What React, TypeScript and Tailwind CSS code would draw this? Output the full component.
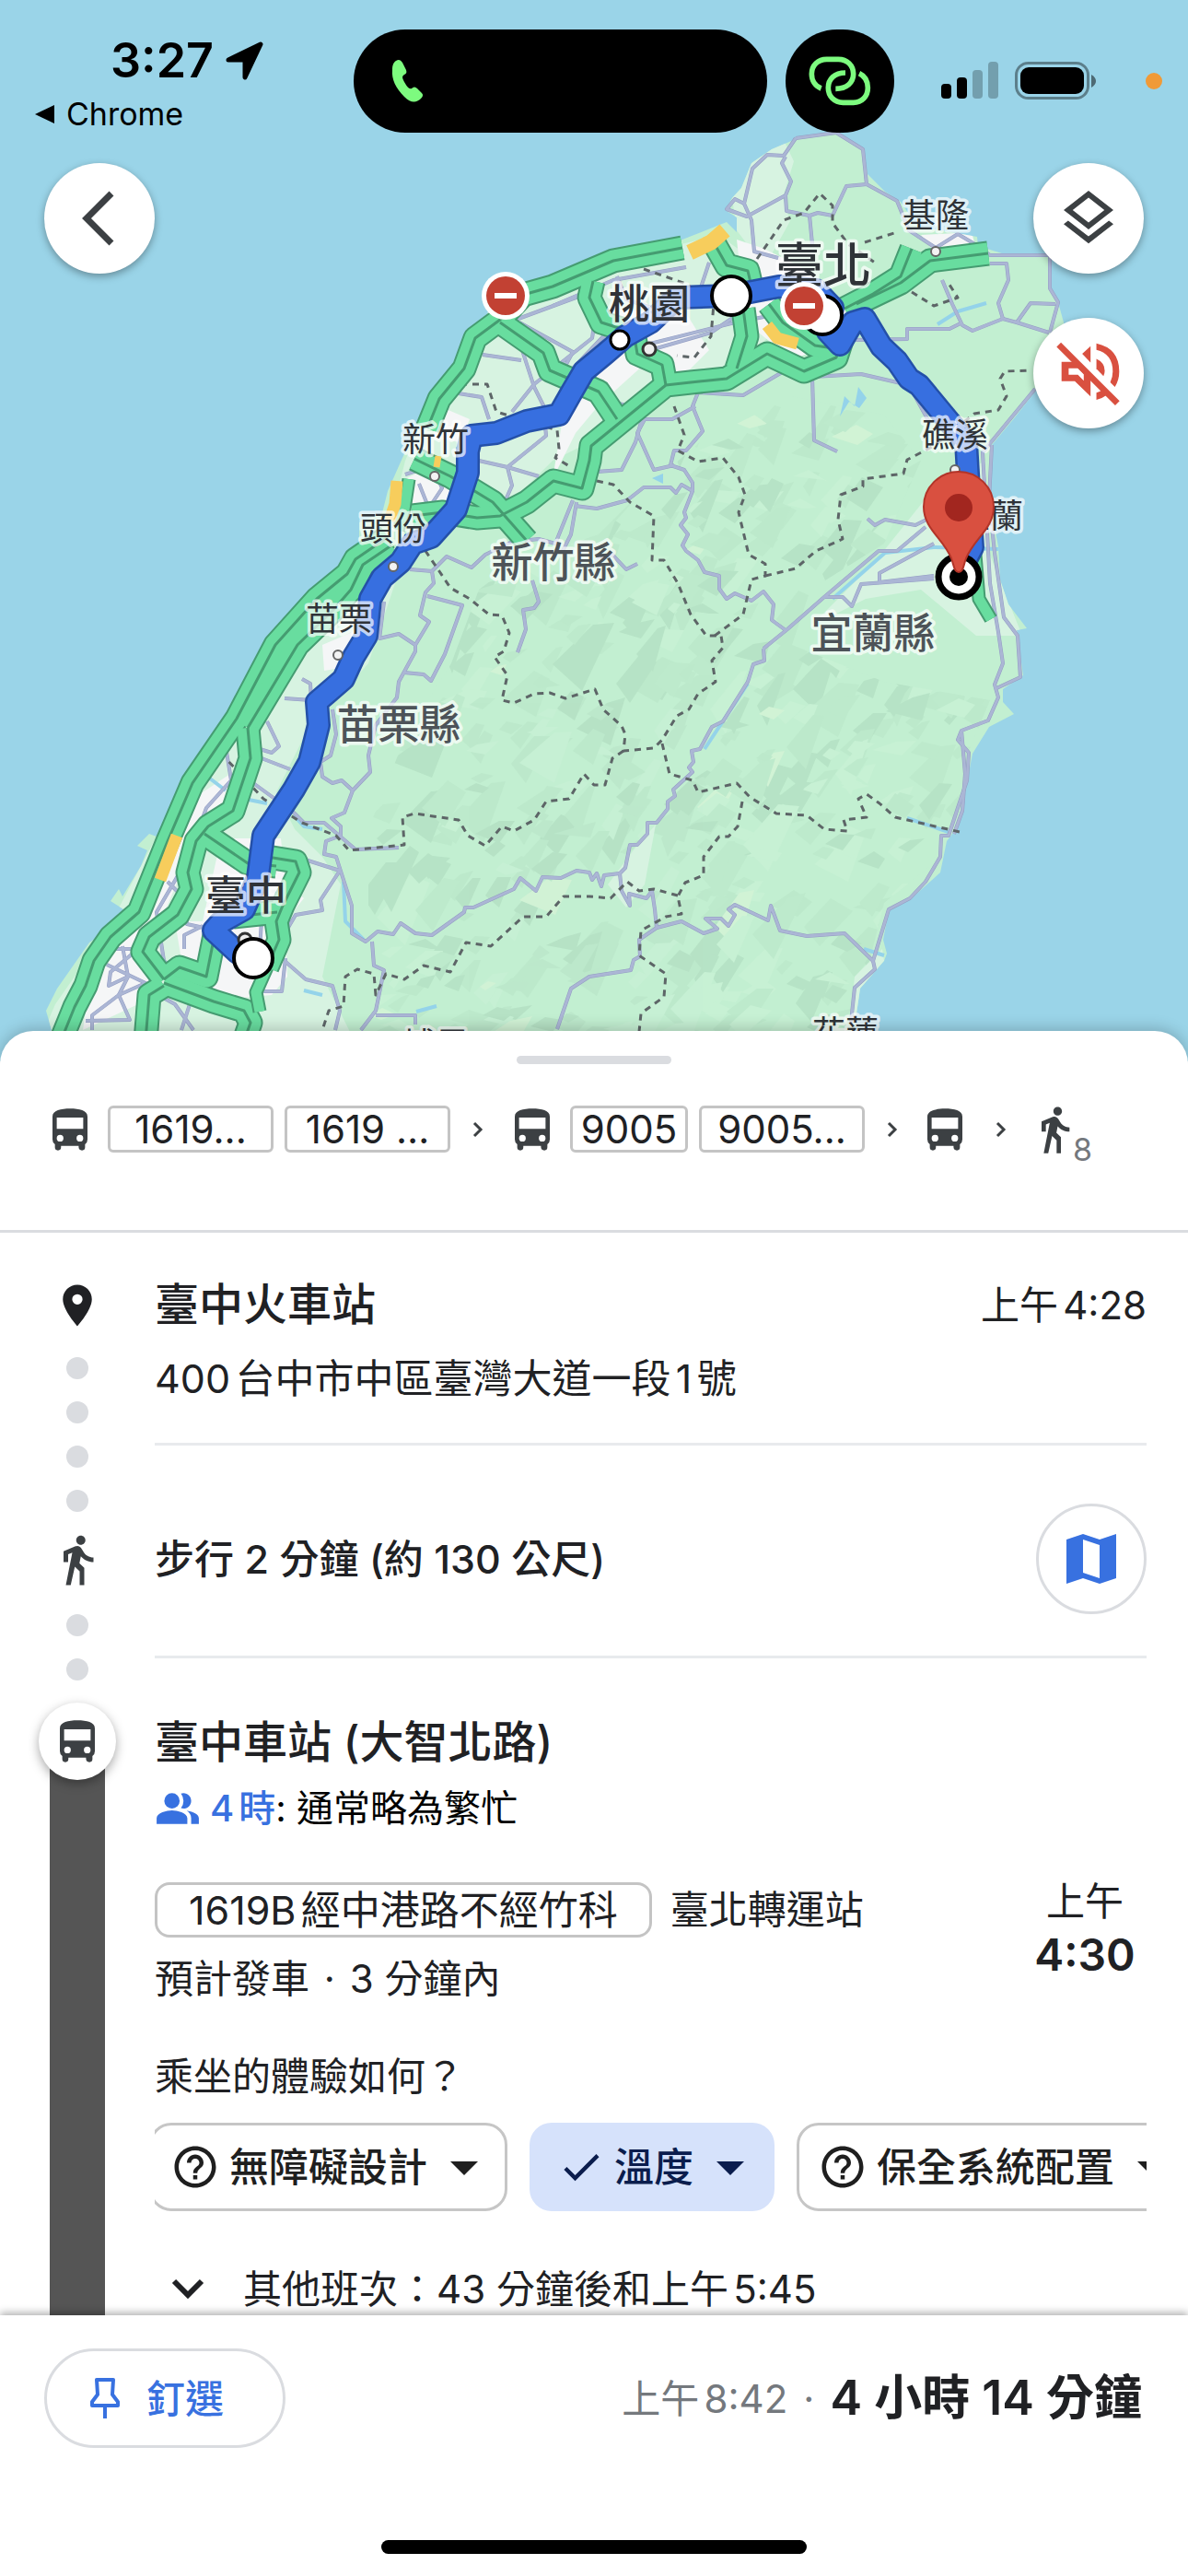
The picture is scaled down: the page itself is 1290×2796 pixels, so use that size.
import React, { useState } from "react";
import type { ReactNode } from "react";
import {
  MdArrowDropDown,
  MdCheck,
  MdDirectionsWalk,
  MdHelpOutline,
  MdOutlineLayers,
  MdPeopleAlt,
  MdPlace,
} from "react-icons/md";

// --- Map data ---

const LAND =
  "864,151 908,144 937,160 942,189 961,208 978,219 996,246 1033,252 1061,257 1062,267 1088,275 1139,277 1140,313 1149,328 1155,350 1152,390 1135,411 1102,453 1077,483 1074,541 1084,593 1086,629 1095,656 1115,682 1104,684 1111,733 1089,748 1089,762 1101,775 1074,789 1056,818 1048,860 1038,900 1028,913 1021,947 992,973 965,988 959,1020 963,1035 960,1043 934,1073 930,1100 924,1160 30,1160 56,1118 50,1097 62,1073 97,1023 116,1010 139,990 120,978 129,965 133,973 153,940 160,923 149,918 162,905 170,908 197,850 249,777 288,693 303,677 332,647 344,633 381,605 390,593 390,567 415,557 421,533 437,497 454,460 466,427 493,397 512,358 524,350 531,337 576,313 600,302 666,273 736,262 789,241 800,252 800,236 789,229 794,216 805,204 816,177 838,162";

const LOWLANDS = [
  "531,337 600,305 700,275 780,255 830,290 860,340 800,400 720,420 660,470 600,500 560,540 520,560 460,560 430,540 440,500 466,440 495,400",
  "345,640 400,610 440,600 400,720 330,800 300,860 320,900 350,930 370,960 350,1060 380,1120 30,1160 60,1090 116,1010 153,940 190,870 249,777",
  "1014,530 1070,500 1074,600 1110,690 1060,690 1000,640 940,650 880,680 950,610",
  "816,177 850,150 862,175 850,215 858,240 830,290 800,250 795,215",
  "660,960 690,920 712,895 700,960 680,985",
  "928,1060 958,1030 960,1043 934,1073 930,1160 918,1160",
];

const URBAN = [
  "655,335 745,340 770,380 740,410 700,395 650,440 625,470 600,520 615,430 650,400",
  "800,260 830,270 870,290 920,330 915,370 860,390 810,350",
  "440,520 480,500 500,530 490,560 450,555",
  "475,440 510,455 500,480 470,475",
  "205,870 250,840 245,880 215,900 200,940 170,1010 175,1060 150,1090 90,1118 100,1050 125,1020 160,985 180,950",
  "240,910 305,910 310,960 330,975 310,1000 312,1060 295,1080 240,1085 200,1060 190,1000 220,1000",
  "350,700 385,685 370,725 352,728",
  "1000,255 1055,252 1060,270 1020,280",
  "420,600 400,640 392,650 400,620",
];

const MOUNTAINS =
  "560,610 650,580 690,540 760,480 860,430 960,450 1000,500 960,590 880,640 860,700 960,740 1075,760 1050,820 1038,880 1010,940 960,980 940,1060 920,1160 390,1160 400,1050 400,900 440,800 490,720 520,640";

const SMALL_ROADS = [
  "864,150 851,169 833,168 817,183 808,221 816,239 819,273 845,280",
  "853,170 849,177 859,197 853,212 811,235 789,227 798,216 808,221",
  "853,212 854,229 879,234 882,265",
  "864,150 908,144 937,162 941,200 919,202 904,234 888,231 879,234",
  "941,200 974,218 987,250 1016,269 1040,254 1062,267 1075,277 1140,277 1140,313 1149,328 1140,361",
  "1023,304 1034,330 1045,353 1056,359 1089,346 1104,350 1139,361",
  "1104,350 1119,329 1146,330",
  "926,369 985,368 985,357 1031,357 1045,350",
  "1075,286 1093,286 1095,304 1084,329 1089,346",
  "882,409 884,478 909,490",
  "882,409 935,406 987,418 1010,460",
  "1124,422 1067,491 1075,633 1084,686 1089,720 1080,743 1084,757 1073,782 1044,793 1040,803 1052,817 1050,847 1038,883 1030,907 1022,907 1021,930 1005,957 988,975 965,987 948,1043 950,1052 928,1072 924,1110",
  "1044,793 1048,840 1045,880 1036,905",
  "1077,483 1074,541 1080,600 1090,670 1105,690 1108,735 1080,748",
  "1014,560 994,570 961,564 950,570 942,563",
  "1005,572 974,598 954,598 895,648 855,683 829,704",
  "1014,590 955,622 955,632 1014,625",
  "1014,628 935,634 925,658 915,648 895,648",
  "829,704 830,717 818,721 812,740 785,783 773,789 760,813 751,815 753,827 748,833 752,838 731,857 733,864 725,870 725,878 713,893 703,893 703,905 692,917 684,917 679,942 673,948 675,967 684,983 683,970 702,975 708,967 711,987 713,1007 694,1020 695,1038 688,1042 685,1053 640,1060 620,1073 605,1117",
  "713,1007 740,1000 764,1013 779,1008 766,997 783,997 791,1005 798,993 791,987 798,982 834,999 837,983 847,1010 876,1016 917,1013 948,1043",
  "673,948 656,950 653,962 648,948 643,955 640,947 626,945 609,953 589,952 582,967 565,953 558,965 514,985 505,985 504,990 469,1015 451,1013 435,1002 427,1014 410,1011 397,1022 382,1013 382,983 365,930 352,927 354,913 370,907 370,897 360,888 374,882 383,858 402,838 400,820 408,787 431,757 433,740 451,707 451,700 466,675 456,668 462,643 471,633 469,620 485,604 512,616 527,602 556,588 585,585 603,590 622,543",
  "624,549 648,552 681,543 699,529 728,529 734,535 740,526 752,533 743,556 745,562 739,570 747,580 741,592 745,598 758,608 765,621 781,625 781,639 789,650 798,644 816,652 829,642 840,656 838,673 853,684",
  "752,533 752,524 743,510 728,505 732,489 745,489 763,468 752,441 758,426 807,429 851,403 873,390",
  "732,505 710,510 692,470 700,455 730,455 755,441",
  "648,512 675,510 690,480 697,455",
  "600,332 666,304 745,290",
  "706,373 798,350 850,340",
  "706,380 772,361 800,342",
  "770,285 760,315 720,330",
  "670,300 680,325 740,345",
  "564,350 622,382 614,397",
  "560,347 647,315",
  "647,340 643,367 580,417 556,447",
  "566,377 580,420 590,440 593,473 551,507 556,527 548,545",
  "520,500 551,507 585,517",
  "524,385 566,391",
  "498,427 523,431 531,455",
  "600,400 640,430 700,445",
  "620,440 622,400 660,360",
  "440,515 470,505 480,530 460,560",
  "455,525 465,550 490,550",
  "464,647 502,657 483,710 468,739 460,732 439,730",
  "578,630 585,653 580,660 568,662 571,683 562,708",
  "417,653 412,693 433,688 451,700",
  "445,618 470,620",
  "328,737 337,742 338,760 309,758",
  "284,823 315,835",
  "290,783 303,810 295,817 282,813",
  "361,770 365,797 359,820 348,827 350,843 361,850 371,847 383,858",
  "275,850 319,882 330,893 352,893 386,922 433,920",
  "328,932 369,945 348,977 350,988 321,993 311,1010",
  "309,1043 332,1063 361,1070 369,1097 364,1118",
  "404,1022 406,1048 417,1053 408,1097 392,1118",
  "408,1102 451,1102 451,1112",
  "245,810 251,847 224,877 205,930 170,990 178,1043 200,1060",
  "116,1047 158,1067 129,1080 100,1102 100,1118",
  "133,1027 139,1060 129,1080 141,1107 93,1108",
  "118,1030 150,1030 120,1055 118,1070 139,1060",
  "207,1087 197,1118",
  "172,1080 190,1090 210,1118",
  "182,957 200,975 203,1003 235,1010",
  "310,1040 306,1076 280,1076",
  "220,1005 200,1015 200,1030",
  "284,1000 282,1030",
  "626,545 620,580 610,600",
  "648,605 665,602 680,618 692,612",
];

const GREEN_ROADS = [
  "66,1130 81,1093 93,1070 102,1043 120,1017 151,990 182,913 209,850 257,780 299,700 344,650 377,623 386,607 421,583",
  "269,790 323,700 361,663 381,640 394,613 425,592",
  "269,790 272,823 253,880 226,897 213,913 204,947 208,965 193,993 162,1017 155,1033 178,1063",
  "178,1063 195,1050 224,1060 234,1010",
  "222,905 269,937 300,940",
  "290,930 321,935 325,947 307,983 300,1000 303,1020 290,1050",
  "253,995 301,990",
  "178,1067 232,1087 265,1097 272,1110 265,1130",
  "178,1070 162,1080 158,1130",
  "464,465 477,433 504,400 516,367 543,347 568,320 600,311 666,283 741,269",
  "776,265 789,288 812,294 816,311",
  "543,350 590,383 597,402 650,425 670,455",
  "450,498 489,517 535,545 572,587",
  "448,560 481,556 518,562 543,560 572,545 601,522 632,530 640,500 642,484 723,418 750,415 789,411 833,384 873,403 908,388 917,360",
  "723,418 719,396 692,384 688,360",
  "644,305 640,323 653,350 675,357",
  "807,335 811,365 800,400",
  "917,335 948,319 978,300 990,270",
  "930,330 978,307 1010,283 1073,275",
  "835,330 850,350 885,375 905,378",
];

const BORDERS = [
  "500,417 529,417 539,447 593,463 605,467 607,487 603,497 620,507",
  "648,522 666,526 684,545 710,560 708,608 721,608 736,633 750,667 767,690 783,690 785,703 773,717 777,740 758,753 748,770 735,777 719,803 710,812 677,815 679,797 675,788 655,770 646,748 614,758 597,752 580,753 558,763 545,760 551,733 537,713 547,707 553,687 545,668 531,667 510,650 489,638 477,620 462,598",
  "677,815 665,823 657,852 645,852 634,840 618,867 593,870 580,890 558,902 545,897 527,918 508,907 498,890 450,883 437,887 439,917 379,923 365,907 328,893 286,867 245,823",
  "719,807 727,840 752,847 758,860 800,850 814,865 843,883 876,885 895,900 920,902 916,890 941,887 932,867 941,862 955,872 972,887 1042,903",
  "806,870 801,897 791,908 781,908 764,930 764,950 744,958 736,973 740,992 723,995 696,1010 694,1037 723,1057 721,1082 696,1100 694,1120",
  "736,972 710,965 694,967 681,957 663,975 640,973 612,973 593,995 568,995 533,1027 506,1023 489,1055 460,1048 439,1063 419,1057 408,1080 406,1057 388,1052 375,1060 373,1092 357,1097 350,1118",
  "732,441 743,472 736,489 758,501 785,497 802,518 809,537 802,556 813,602 831,612 831,625 816,629 807,667 776,690",
  "831,625 864,617 886,598 915,585 910,564 913,537 937,528 937,520 981,514 985,499 1014,484 1058,449 1084,445 1093,430 1086,411 1091,403 1119,402",
  "822,281 838,258 851,239 873,231 890,210 904,223 904,242 921,265 950,285",
  "939,263 974,252",
  "990,317 1014,332 1040,323 1029,306",
  "699,292 745,308 775,330 772,365 754,388 735,386",
];

const ROUTE =
  "258,1034 232,1010 240,1001 265,987 280,953 286,907 319,857 336,827 346,787 344,762 373,737 384,713 398,690 402,650 415,627 435,610 448,590 468,583 495,553 508,513 508,490 512,473 539,470 572,457 607,450 620,427 634,403 657,384 679,365 706,350 735,323 794,321 846,311 886,315 904,334 899,360 912,374 926,350 939,346 957,376 974,392 987,411 998,418 1036,464 1049,480 1051,514 1056,594 1044,617";

// x, y are the centre of the label
const LABELS = [
  { text: "基隆", x: 1016, y: 234, kind: "town" },
  { text: "新竹", x: 473, y: 477, kind: "town" },
  { text: "頭份", x: 427, y: 574, kind: "town" },
  { text: "苗栗", x: 368, y: 672, kind: "town" },
  { text: "礁溪", x: 1037, y: 472, kind: "town" },
  { text: "宜蘭", x: 1075, y: 560, kind: "town" },
  { text: "埔里", x: 473, y: 1134, kind: "town" },
  { text: "花蓮", x: 918, y: 1121, kind: "town" },
  { text: "桃園", x: 705, y: 330, kind: "city" },
  { text: "臺中", x: 267, y: 972, kind: "city" },
  { text: "臺北", x: 894, y: 288, kind: "capital" },
  { text: "新竹縣", x: 601, y: 610, kind: "county" },
  { text: "苗栗縣", x: 433, y: 786, kind: "county" },
  { text: "宜蘭縣", x: 948, y: 687, kind: "county" },
];

const LABEL_STYLE: Record<string, string> = {
  town: "text-[36px] fill-[#2f3338]",
  city: "text-[44px] font-medium fill-[#2f3338]",
  capital: "text-[52px] font-medium fill-[#2f3338]",
  county: "text-[45px] font-medium fill-[#4d5358]",
};

// Relief: slanted shards, same pattern on every render
const FACET_COLORS = ["#b0dcc0", "#bae6c9", "#c9f1d6", "#b9e5c8", "#d9f4d8"];

const buildFacets = () => {
  let seed = 11;
  const rand = () => {
    seed = (seed * 16807) % 2147483647;
    return seed / 2147483647;
  };
  return Array.from({ length: 620 }, () => {
    const x = 390 + rand() * 690;
    const y = 430 + rand() * 710;
    const len = 10 + rand() * rand() * 70;
    const w = 6 + rand() * 18;
    const pick = rand();
    const fill =
      pick > 0.97 ? FACET_COLORS[4] : FACET_COLORS[Math.floor(pick * 4)];
    const pts = [
      [x, y],
      [x + w, y + w * (rand() - 0.3)],
      [x + w * rand() - len * 0.3, y + len],
      [x - w * rand() - len * 0.4, y + len * 0.6],
    ];
    return { fill, points: pts.map((p) => p.map(Math.round).join(",")).join(" ") };
  });
};

const FACETS = buildFacets();

const TransitMap = () => (
  <svg
    viewBox="0 0 1290 1152"
    preserveAspectRatio="xMidYMin slice"
    className="absolute inset-0 w-full h-full"
    strokeLinejoin="round"
    fill="none"
    role="img"
    aria-label="路線地圖"
  >
    <clipPath id="mountains">
      <polygon points={MOUNTAINS} />
    </clipPath>
    <clipPath id="land">
      <polygon points={LAND} />
    </clipPath>
    <polygon points={LAND} fill="#c2efd1" />
    <g clipPath="url(#land)">
      <g clipPath="url(#mountains)" opacity="0.65">
        {FACETS.map((f, i) => (
          <polygon key={i} points={f.points} fill={f.fill} />
        ))}
      </g>
      {LOWLANDS.map((p) => (
        <polygon key={p} points={p} fill="#d7f3e1" />
      ))}
      {URBAN.map((p) => (
        <polygon key={p} points={p} fill="#f5f6f7" />
      ))}
    </g>
    <path
      d="M912 452 917 430 928 441 932 420 941 432 933 443 922 436Z M708 519 720 514 720 525Z"
      fill="#94d3ea"
    />
    <path
      d="M1084 596 L1014 594 961 600 904 650 M1071 329 1040 338 1018 352 M373 957 375 1000 395 1020 M319 885 330 897 350 900 M228 845 245 858 M270 868 290 872 M985 888 1030 903 M938 1030 960 1037 M330 1075 350 1080 M452 1098 474 1092 M812 742 765 813"
      stroke="#94d3ea"
      strokeWidth="4"
    />
    {SMALL_ROADS.map((p) => (
      <polyline key={p} points={p} stroke="#939cc2" strokeWidth="4" />
    ))}
    {SMALL_ROADS.map((p) => (
      <polyline key={p} points={p} stroke="#abb6d5" strokeWidth="3" />
    ))}
    {BORDERS.map((p) => (
      <polyline
        key={p}
        points={p}
        stroke="#5d6567"
        strokeWidth="3"
        strokeDasharray="7 6"
      />
    ))}
    {GREEN_ROADS.map((p) => (
      <polyline key={p} points={p} stroke="#459c71" strokeWidth="27" />
    ))}
    {GREEN_ROADS.map((p) => (
      <polyline key={p} points={p} stroke="#68dd9f" strokeWidth="23" />
    ))}
    {GREEN_ROADS.map((p) => (
      <polyline key={p} points={p} stroke="#459c71" strokeWidth="3" />
    ))}
    {/* Single carriageways */}
    <path
      d="M444 520 439 553 432 575 M282 1098 278 1077 290 1050 M1058 590 1063 650 1076 672"
      stroke="#459c71"
      strokeWidth="15"
    />
    <path
      d="M444 520 439 553 432 575 M282 1098 278 1077 290 1050 M1058 590 1063 650 1076 672"
      stroke="#68dd9f"
      strokeWidth="11"
    />
    {/* Slow traffic */}
    <path d="M749 274 772 263 787 250" stroke="#f7cd5c" strokeWidth="17" />
    <path
      d="M431 522 429 547 423 565 M192 907 174 955 M833 353 844 367 866 373"
      stroke="#f7cd5c"
      strokeWidth="13"
    />
    <path d="M476 495 474 507" stroke="#f7cd5c" strokeWidth="7" />

    <polyline
      points={ROUTE}
      stroke="#2450a8"
      strokeWidth="26"
      strokeLinecap="round"
    />
    <polyline
      points={ROUTE}
      stroke="#376fe0"
      strokeWidth="21"
      strokeLinecap="round"
    />

    {[
      [472, 517],
      [427, 615],
      [367, 711],
      [1016, 273],
      [1037, 510],
    ].map(([x, y]) => (
      <circle
        key={x}
        cx={x}
        cy={y}
        r="5"
        fill="#f3f3f3"
        stroke="#666"
        strokeWidth="2"
      />
    ))}
    <circle cx="705" cy="379" r="7" fill="#eee" stroke="#333" strokeWidth="3" />
    <circle cx="266" cy="1020" r="7" fill="#eee" stroke="#333" strokeWidth="3" />

    {LABELS.map(({ text, x, y, kind }) => (
      <text
        key={text}
        x={x}
        y={y}
        textAnchor="middle"
        dominantBaseline="central"
        stroke="#ffffff"
        strokeOpacity="0.7"
        strokeWidth="7"
        paintOrder="stroke"
        className={LABEL_STYLE[kind]}
      >
        {text}
      </text>
    ))}

    <g fill="#fff" stroke="#000">
      <circle cx="673" cy="369" r="10" strokeWidth="3" />
      <circle cx="794" cy="321" r="21" strokeWidth="4" />
      <circle cx="893" cy="342" r="21" strokeWidth="4" />
      <circle cx="275" cy="1040" r="21" strokeWidth="4" />
    </g>
    {[
      [549, 321],
      [873, 332],
    ].map(([x, y]) => (
      <g key={x}>
        <circle cx={x} cy={y} r="26" fill="#fff" />
        <circle cx={x} cy={y} r="21" fill="#c24133" />
        <rect x={x - 12} y={y - 3} width="24" height="6" fill="#fff" />
      </g>
    ))}

    {/* Destination */}
    <circle cx="1041" cy="626" r="22" fill="#fff" stroke="#000" strokeWidth="7" />
    <circle cx="1041" cy="626" r="10" fill="#000" />
    <path
      d="M1041 621 C1036 621 1036 614 1033 606 C1024 584 1003 574 1003 550 A38 38 0 0 1 1079 550 C1079 574 1058 584 1049 606 C1046 614 1046 621 1041 621Z"
      fill="#d95040"
      stroke="#b23428"
      strokeWidth="2"
    />
    <circle cx="1041" cy="551" r="15" fill="#a2261f" />
  </svg>
);

// --- Icons ---

const BusIcon = () => (
  <svg viewBox="52 64 115 137" className="w-[38px] h-[46px] shrink-0">
    <path
      fill="#3c4043"
      fillRule="evenodd"
      d="M52 90C52 70 80 64 110 64S167 70 167 90V165Q167 176 159 181V191Q159 201 149 201T138 191V186H80V191Q80 201 70 201T60 191V181Q52 176 52 165ZM66 93V130H153V93ZM66 161A11 11 0 1 0 88 161A11 11 0 1 0 66 161ZM131 161A11 11 0 1 0 153 161A11 11 0 1 0 131 161Z"
    />
  </svg>
);

const MapIcon = () => (
  <svg viewBox="0 0 54 54" className="w-[54px] h-[54px]">
    <path
      fill="#3871e0"
      fillRule="evenodd"
      d="M0 6L18 0L36 6L54 0V48L36 54L18 48L0 54ZM18 6V42L36 48V12Z"
    />
  </svg>
);

const MuteIcon = () => (
  <svg viewBox="110 595 215 215" className="w-[72px] h-[72px]" fill="#d95040">
    <path d="M121 610L311 800" stroke="#d95040" strokeWidth="20" />
    <path
      fillRule="evenodd"
      d="M130 666H176L224 714V778L173 729H130ZM153 687V708H183L202 727V706L183 687Z"
    />
    <path d="M197 640L224 615V668Z" />
    <path d="M243 656Q270 668 270 695Q270 704 266 712L243 688Z" />
    <path d="M243 606Q317 622 317 697Q317 724 303 747L288 732Q296 716 296 697Q296 640 243 627Z" />
    <path d="M243 766Q254 763 262 757L278 773Q262 785 243 789Z" />
  </svg>
);

const LinkIcon = () => (
  <svg
    viewBox="116 122 204 162"
    className="w-[68px] h-[54px]"
    fill="none"
    stroke="#7dfb7f"
    strokeWidth="17"
  >
    <path d="M157 227C138 220 126 202 126 180C126 152 147 132 175 132H213C241 132 262 152 262 180C262 208 240 228 204 228" />
    <path d="M236 176C200 176 180 197 180 225C180 253 200 273 228 273H262C290 273 309 253 309 225C309 203 300 187 281 178" />
  </svg>
);

const PinIcon = () => (
  <svg
    viewBox="0 0 34 46"
    className="w-[34px] h-[46px]"
    fill="none"
    stroke="#3871e0"
    strokeWidth="4"
  >
    <path d="M8 3H26L25 19L31 27V31H3V27L9 19L8 3Z" strokeLinejoin="round" />
    <path d="M17 31V45" />
  </svg>
);

const SmallChevron = () => (
  <svg viewBox="0 0 12 18" className="w-3 h-[18px] shrink-0">
    <path d="M2 2L9 9L2 16" fill="none" stroke="#3c4043" strokeWidth="3" />
  </svg>
);

// --- Sub components ---

const StatusBar = () => (
  <div className="relative flex items-start pt-8 text-black">
    <div className="w-[384px] shrink-0">
      <div className="flex items-center gap-3 pl-[120px] h-[68px]">
        <span className="text-[52px] font-semibold leading-none">3:27</span>
        <svg viewBox="0 0 42 42" className="w-[42px] h-[42px]">
          <path
            d="M39 3L22 39V20H4Z"
            stroke="#000"
            strokeWidth="5"
            strokeLinejoin="round"
          />
        </svg>
      </div>
      <a href="#chrome" className="flex items-center gap-3 pl-9 h-12">
        <svg viewBox="0 0 24 22" className="w-6 h-[22px]">
          <path d="M2 11L23 1V21Z" />
        </svg>
        <span className="text-[34px] leading-none">Chrome</span>
      </a>
    </div>
    <div className="w-[449px] h-28 shrink-0 rounded-full bg-black flex items-center pl-10">
      <svg viewBox="0 0 36 48" className="w-9 h-12">
        <path
          fill="#7dfb7f"
          d="M6 2C9 0 11 1 13 4L17 12C18 15 17 16 15 17C12 19 13 21 15 25C18 30 20 33 23 32C25 30 27 30 29 32L34 37C36 39 35 41 33 43C28 48 22 48 15 41C6 32 1 22 2 12C2 7 3 4 6 2Z"
        />
      </svg>
    </div>
    <div className="ml-5 w-[118px] h-28 shrink-0 rounded-full bg-black flex items-center justify-center">
      <LinkIcon />
    </div>
    <div className="flex-1 flex items-center pl-[51px] pr-7 h-28">
      <svg viewBox="0 0 64 42" className="w-16 h-[42px]">
        <rect x="0" y="24" width="11" height="16" rx="4" />
        <rect x="17" y="17" width="11" height="23" rx="4" />
        <rect x="34" y="9" width="11" height="31" rx="4" opacity="0.25" />
        <rect x="51" y="0" width="11" height="40" rx="4" opacity="0.25" />
      </svg>
      <svg viewBox="0 0 90 42" className="ml-4 w-[90px] h-[42px]">
        <rect
          x="1.5"
          y="1.5"
          width="78"
          height="38"
          rx="13"
          fill="none"
          stroke="#000"
          strokeOpacity="0.4"
          strokeWidth="3"
        />
        <rect x="6" y="6" width="69" height="29" rx="9" />
        <path d="M83 14Q88 17 88 21T83 28Z" opacity="0.5" />
      </svg>
      <span className="ml-auto w-[18px] h-[18px] rounded-full bg-[#f09a37]" />
    </div>
  </div>
);

const MapButton = ({
  label,
  children,
}: {
  label: string;
  children: ReactNode;
}) => (
  <button
    aria-label={label}
    className="w-[120px] h-[120px] rounded-full bg-white shadow-[0_3px_8px_rgba(0,0,0,0.35)] flex items-center justify-center text-[#3c4043]"
  >
    {children}
  </button>
);

const LineBadge = ({ text, fit }: { text: string; fit?: boolean }) => (
  <span
    className={`${
      fit ? "w-32" : "w-[180px]"
    } h-[51px] shrink-0 rounded-md border-3 border-[#c4c4c4] flex items-center justify-center text-[42px] leading-none`}
  >
    {text}
  </span>
);

const Dot = () => <span className="w-6 h-6 rounded-full bg-[#dadce0]" />;

const Step = ({ rail, children }: { rail: ReactNode; children: ReactNode }) => (
  <li className="flex">
    <div className="w-[168px] shrink-0 flex flex-col items-center">{rail}</div>
    <div className="flex-1 min-w-0 mr-[45px]">{children}</div>
  </li>
);

const Chip = ({
  label,
  selected,
  onClick,
}: {
  label: string;
  selected?: boolean;
  onClick: () => void;
}) => (
  <button
    aria-pressed={selected}
    onClick={onClick}
    className={`h-24 shrink-0 rounded-3xl flex items-center text-[43px] font-medium ${
      selected
        ? "pl-[30px] pr-3 bg-[#d6e2fb] text-[#0b1d4d]"
        : "pl-5 pr-2 border-3 border-[#c6c6c6] text-[#1f1f1f]"
    }`}
  >
    {selected ? <MdCheck size={52} /> : <MdHelpOutline size={54} />}
    <span className="ml-[10px] mr-1 whitespace-nowrap">{label}</span>
    <MdArrowDropDown size={72} />
  </button>
);

const QUESTIONS = ["無障礙設計", "溫度", "保全系統配置"];

export default function App() {
  const [answered, setAnswered] = useState<string[]>(["溫度"]);

  const toggle = (q: string) =>
    setAnswered((prev) =>
      prev.includes(q) ? prev.filter((a) => a !== q) : [...prev, q]
    );

  return (
    <div
      lang="zh-Hant"
      className="min-h-screen flex flex-col overflow-x-hidden bg-white text-[#202124] font-['Inter','Noto_Sans_CJK_TC',sans-serif] [text-autospace:normal]"
    >
      {/* Map */}
      <section className="relative h-[1152px] bg-[#9ad4e8]">
        <TransitMap />
        <StatusBar />
        <div className="relative flex justify-between items-start px-12 pt-[29px]">
          <MapButton label="返回">
            <svg viewBox="0 0 36 60" className="w-9 h-[60px] mr-1">
              <path
                d="M33 3L6 30L33 57"
                fill="none"
                stroke="#3c4043"
                strokeWidth="7"
              />
            </svg>
          </MapButton>
          <div className="flex flex-col gap-12">
            <MapButton label="圖層">
              <MdOutlineLayers size={72} />
            </MapButton>
            <MapButton label="靜音">
              <MuteIcon />
            </MapButton>
          </div>
        </div>
      </section>

      {/* Sheet */}
      <main className="relative -mt-[33px] rounded-t-[36px] bg-white shadow-[0_-3px_16px_rgba(0,0,0,0.2)]">
        <div className="pt-[27px] flex justify-center">
          <span className="w-[168px] h-[9px] rounded-full bg-[#dadce0]" />
        </div>
        <div className="mt-[45px] h-[135px] pl-[57px] flex items-start">
          <div className="flex items-center h-[51px]">
            <BusIcon />
            <div className="ml-[22px] flex gap-3">
              <LineBadge text="1619..." />
              <LineBadge text="1619 …" />
            </div>
            <div className="px-6">
              <SmallChevron />
            </div>
            <div className="ml-[10px] mr-[22px]">
              <BusIcon />
            </div>
            <div className="flex gap-3">
              <LineBadge text="9005" fit />
              <LineBadge text="9005..." />
            </div>
            <div className="pl-6 pr-8">
              <SmallChevron />
            </div>
            <BusIcon />
            <div className="pl-9 pr-6">
              <SmallChevron />
            </div>
            <MdDirectionsWalk size={56} className="text-[#3c4043]" />
            <span className="-ml-2 mt-11 text-[34px] leading-none text-[#74787d]">
              8
            </span>
          </div>
        </div>

        <ol className="border-t-3 border-[#dadce0]">
          <Step
            rail={
              <>
                <MdPlace size={54} className="mt-[52px]" />
                <span className="h-[29px]" />
                <Dot />
                <span className="h-6" />
                <Dot />
              </>
            }
          >
            <div className="h-[231px] border-b-3 border-[#e8eaed] pt-[42px]">
              <div className="flex items-center justify-between">
                <h2 className="text-[48px] leading-[72px] font-medium">
                  臺中火車站
                </h2>
                <span className="text-[42px]">上午4:28</span>
              </div>
              <p className="mt-[14px] text-[43px] leading-[60px]">
                400台中市中區臺灣大道一段1號
              </p>
            </div>
          </Step>

          <Step
            rail={
              <>
                <Dot />
                <span className="h-6" />
                <Dot />
                <MdDirectionsWalk
                  size={60}
                  className="mt-[22px] mb-[29px] text-[#3c4043]"
                />
                <Dot />
              </>
            }
          >
            <div className="h-[231px] border-b-3 border-[#e8eaed] flex items-center justify-between pt-[18px]">
              <p className="text-[43px] font-medium">
                步行 2 分鐘 (約 130 公尺)
              </p>
              <button
                aria-label="查看步行路線"
                className="w-[120px] h-[120px] rounded-full border-3 border-[#dadce0] flex items-center justify-center"
              >
                <MapIcon />
              </button>
            </div>
          </Step>

          <Step
            rail={
              <>
                <Dot />
                <span className="h-6 shrink-0" />
                <span className="relative z-10 w-[84px] h-[84px] shrink-0 rounded-full bg-white shadow-[0_4px_12px_rgba(0,0,0,0.35)] flex items-center justify-center">
                  <BusIcon />
                </span>
                <span className="-mt-[42px] w-[60px] flex-1 bg-[#555]" />
              </>
            }
          >
            <h2 className="pt-[55px] text-[48px] leading-[72px] font-medium">
              臺中車站 (大智北路)
            </h2>
            <p className="mt-[6px] flex items-center text-[40px] leading-[60px] text-black">
              <MdPeopleAlt size={50} className="mr-[10px] text-[#3871e0]" />
              <span className="text-[#3871e0] font-medium">4時</span>
              <span className="whitespace-pre">: 通常略為繁忙</span>
            </p>

            <div className="mt-[37px] flex justify-between text-[42px] leading-[60px]">
              <div>
                <div className="mt-[13px] flex items-center gap-5">
                  <span className="h-[60px] rounded-2xl border-3 border-[#c4c4c4] px-[34px] flex items-center text-[43px] leading-none">
                    1619B經中港路不經竹科
                  </span>
                  <span>臺北轉運站</span>
                </div>
                <p className="mt-[15px]">
                  預計發車 <span className="mx-1">·</span> 3 分鐘內
                </p>
              </div>
              <div className="w-[134px] text-center pt-1">
                <div>上午</div>
                <div className="text-[48px] leading-[55px] font-semibold">
                  4:30
                </div>
              </div>
            </div>

            <p className="mt-[46px] text-[42px] leading-[60px]">
              乘坐的體驗如何？
            </p>
            <div className="mt-5 overflow-hidden">
              <div className="flex gap-6 -ml-[6px]">
                {QUESTIONS.map((q) => (
                  <Chip
                    key={q}
                    label={q}
                    selected={answered.includes(q)}
                    onClick={() => toggle(q)}
                  />
                ))}
              </div>
            </div>
            <button className="mt-[57px] pl-[18px] flex items-center gap-[42px] text-[42px] leading-[56px]">
              <svg viewBox="0 0 36 24" className="w-9 h-6">
                <path
                  d="M3 3L18 18L33 3"
                  fill="none"
                  stroke="#202124"
                  strokeWidth="6"
                />
              </svg>
              <span>其他班次：43 分鐘後和上午5:45</span>
            </button>
          </Step>
        </ol>
      </main>

      {/* Summary bar */}
      <footer className="relative flex-1 bg-white shadow-[0_-3px_8px_rgba(0,0,0,0.3)] flex flex-col">
        <div className="pl-12 pr-[50px] pt-9 flex items-center justify-between">
          <button className="h-[108px] rounded-full border-3 border-[#dadce0] pl-[46px] pr-16 flex items-center gap-7 text-[42px] font-medium text-[#3871e0]">
            <PinIcon />
            釘選
          </button>
          <p className="flex items-center text-[42px] text-[#74787d]">
            <span>上午8:42</span>
            <span className="mx-[17px]">·</span>
            <strong className="text-[52px] font-semibold text-[#202124]">
              4 小時 14 分鐘
            </strong>
          </p>
        </div>
        <div className="mt-auto pb-6 flex justify-center">
          <span className="w-[462px] h-[15px] rounded-full bg-black" />
        </div>
      </footer>
    </div>
  );
}
